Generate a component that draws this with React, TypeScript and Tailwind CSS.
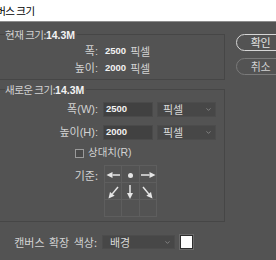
import { ChevronDown } from "lucide-react"

const ko = "font-['Noto_Sans_CJK_KR',sans-serif]"
const mix = "font-['Liberation_Sans','Noto_Sans_CJK_KR',sans-serif]"
const num = "font-['Liberation_Sans','Noto_Sans_CJK_KR',sans-serif] font-bold"

function Arrow({ d }: { d: [number, number, number, number] }) {
  const [x1, y1, x2, y2] = d
  const a = Math.atan2(y2 - y1, x2 - x1)
  const len = 6
  const w = 3
  const bx = x2 - Math.cos(a) * len
  const by = y2 - Math.sin(a) * len
  const px = -Math.sin(a) * w
  const py = Math.cos(a) * w
  return (
    <svg width="16" height="16" viewBox="0 0 16 16">
      <line x1={x1} y1={y1} x2={bx} y2={by} stroke="#e6e6e6" strokeWidth="1.5" />
      <polygon points={`${x2},${y2} ${bx + px},${by + py} ${bx - px},${by - py}`} fill="#e6e6e6" />
    </svg>
  )
}

function Select({ label, w, pl }: { label: string; w: string; pl: string }) {
  return (
    <div className={`${w} ${pl} h-[15px] bg-[#474747] border border-[#4c4c4c] flex items-center justify-between pr-[3px]`}>
      <span className={`${ko} text-[11px] leading-none text-[#d8d8d8]`}>{label}</span>
      <ChevronDown size={7} strokeWidth={2} className="text-[#a8a8a8]" />
    </div>
  )
}

export default function App() {
  return (
    <div className="w-[276px] h-[260px] bg-[#535353] overflow-hidden flex flex-col">
      <div className="h-[22px] shrink-0 bg-white border-b border-[#8c8c8c] flex items-center">
        <span className={`${ko} text-[10.5px] tracking-[-0.5px] text-black -ml-[13px]`}>캔버스 크기</span>
      </div>

      <div className="flex">
        <div className="-ml-[3px] w-[228px] shrink-0 flex flex-col">
          <fieldset className="mt-[5px] h-[53px] border border-[#464646]">
            <legend className="ml-[7px] pr-[2px] leading-[12px]">
              <span className={`${ko} text-[10.5px] tracking-[-0.5px] text-[#d2d2d2]`}>현재 크기:</span>
              <span className={`${num} text-[10.5px] text-[#f2f2f2]`}>14.3M</span>
            </legend>
            <div className="pt-[2px] grid grid-cols-[100px_auto] gap-x-[7px]">
              {[
                ["폭:", "2500"],
                ["높이:", "2000"],
              ].map(([l, v]) => (
                <div key={l} className="contents">
                  <div className={`${mix} h-[17px] flex items-center justify-end text-[11px] text-[#d2d2d2]`}>{l}</div>
                  <div className="h-[17px] flex items-center gap-[4px]">
                    <span className={`${num} text-[9.5px] text-[#f2f2f2]`}>{v}</span>
                    <span className={`${ko} text-[11px] tracking-[-0.3px] text-[#d2d2d2]`}>픽셀</span>
                  </div>
                </div>
              ))}
            </div>
          </fieldset>

          <fieldset className="mt-[2px] h-[140px] border border-[#464646]">
            <legend className="ml-[7px] pr-[2px] leading-[12px]">
              <span className={`${ko} text-[10.5px] tracking-[-0.5px] text-[#d2d2d2]`}>새로운 크기:</span>
              <span className={`${num} text-[10.5px] text-[#f2f2f2]`}>14.3M</span>
            </legend>
            <div className="pt-[6px] grid grid-cols-[100px_auto] gap-x-[5px] gap-y-[8px]">
              {[
                ["폭(W):", "2500"],
                ["높이(H):", "2000"],
              ].map(([l, v]) => (
                <div key={l} className="contents">
                  <div className={`${mix} h-[15px] flex items-center justify-end text-[11px] text-[#d2d2d2]`}>{l}</div>
                  <div className="flex gap-[4px]">
                    <div className="w-[50px] h-[15px] bg-[#414141] border border-[#4a4a4a] flex items-center pl-[2px]">
                      <span className={`${num} text-[9.5px] text-[#f2f2f2]`}>{v}</span>
                    </div>
                    <Select label="픽셀" w="w-[59px]" pl="pl-[5px]" />
                  </div>
                </div>
              ))}
            </div>

            <div className="mt-[7px] pl-[77px] h-[12px] flex items-center gap-[4px]">
              <div className="w-[9px] h-[9px] border border-[#9a9a9a] bg-[#4a4a4a]" />
              <span className={`${mix} text-[10.5px] text-[#d2d2d2]`}>상대치(R)</span>
            </div>

            <div className="mt-[6px] grid grid-cols-[100px_auto] gap-x-[5px]">
              <div className={`${ko} pt-[4px] text-right text-[11px] leading-[12px] text-[#d2d2d2]`}>기준:</div>
              <div className="ml-px w-[53px] grid grid-cols-3 gap-px p-px bg-[#5e5e5e]">
                <div className="h-4 bg-[#535353] flex items-center justify-center">
                  <Arrow d={[15, 9, 1.5, 9]} />
                </div>
                <div className="h-4 bg-[#535353] flex items-center justify-center">
                  <div className="w-[5px] h-[5px] mt-[2px] rounded-full bg-[#e6e6e6]" />
                </div>
                <div className="h-4 bg-[#535353] flex items-center justify-center">
                  <Arrow d={[1, 9, 15.5, 9]} />
                </div>
                <div className="h-4 bg-[#535353] flex items-center justify-center">
                  <Arrow d={[13, 4, 3.5, 15.5]} />
                </div>
                <div className="h-4 bg-[#535353] flex items-center justify-center">
                  <Arrow d={[8, 2, 8, 16]} />
                </div>
                <div className="h-4 bg-[#535353] flex items-center justify-center">
                  <Arrow d={[3, 4, 12.5, 15.5]} />
                </div>
                <div className="h-4 bg-[#535353]" />
                <div className="h-4 bg-[#535353]" />
                <div className="h-4 bg-[#535353]" />
              </div>
            </div>
          </fieldset>

          <div className="mt-[13px] grid grid-cols-[100px_auto] gap-x-[5px]">
            <div className={`${ko} h-[14px] flex items-center justify-end text-[11px] [word-spacing:2px] text-[#d2d2d2]`}>캔버스 확장 색상:</div>
            <div className="flex gap-[5px]">
              <div className="w-[73px] h-[14px] bg-[#474747] border border-[#4c4c4c] flex items-center justify-between pl-[7px] pr-[3px]">
                <span className={`${ko} text-[11px] leading-none text-[#d8d8d8]`}>배경</span>
                <ChevronDown size={7} strokeWidth={2} className="text-[#a8a8a8]" />
              </div>
              <div className="w-[13px] h-[14px] bg-white border border-[#2e2e2e] outline outline-1 outline-[#6a6a6a]" />
            </div>
          </div>
        </div>

        <div className="ml-[11px] pt-[12px] flex flex-col gap-[7px] shrink-0">
          <div className="w-[49px] h-[17px] rounded-full border border-[#d6d6d6] flex items-center justify-center">
            <span className={`${ko} text-[11px] tracking-[-0.3px] text-[#e2e2e2]`}>확인</span>
          </div>
          <div className="w-[49px] h-[17px] rounded-full border border-[#7a7a7a] flex items-center justify-center">
            <span className={`${ko} text-[11px] tracking-[-0.3px] text-[#d2d2d2]`}>취소</span>
          </div>
        </div>
      </div>
    </div>
  )
}
